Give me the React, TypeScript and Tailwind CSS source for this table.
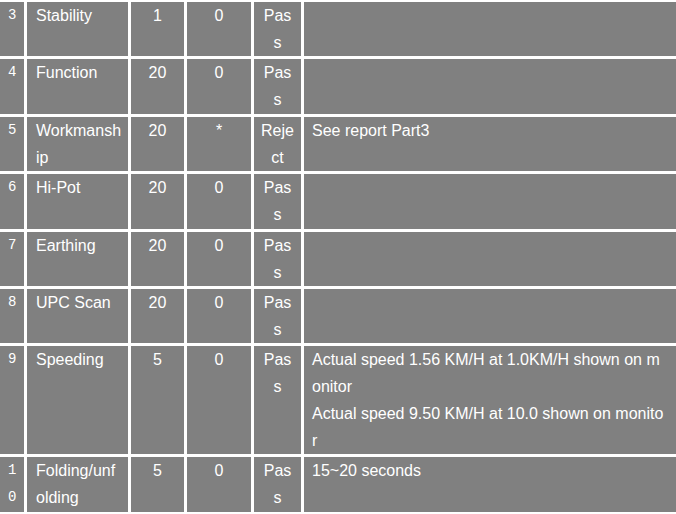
import React from "react";

type Row = {
  no: string;
  item: string;
  qty: string;
  defect: string;
  result: string;
  remark: string[];
};

const rows: Row[] = [
  { no: "3", item: "Stability", qty: "1", defect: "0", result: "Pass", remark: [] },
  { no: "4", item: "Function", qty: "20", defect: "0", result: "Pass", remark: [] },
  { no: "5", item: "Workmanship", qty: "20", defect: "*", result: "Reject", remark: ["See report Part3"] },
  { no: "6", item: "Hi-Pot", qty: "20", defect: "0", result: "Pass", remark: [] },
  { no: "7", item: "Earthing", qty: "20", defect: "0", result: "Pass", remark: [] },
  { no: "8", item: "UPC Scan", qty: "20", defect: "0", result: "Pass", remark: [] },
  {
    no: "9",
    item: "Speeding",
    qty: "5",
    defect: "0",
    result: "Pass",
    remark: [
      "Actual speed 1.56 KM/H at 1.0KM/H shown on monitor",
      "Actual speed 9.50 KM/H at 10.0 shown on monitor",
    ],
  },
  { no: "10", item: "Folding/unfolding", qty: "5", defect: "0", result: "Pass", remark: ["15~20 seconds"] },
];

const cell = "bg-[#808080] text-white break-all";

export default function App() {
  return (
    <div className="w-[676px] h-[514px] overflow-hidden bg-white pt-[2px] font-['Liberation_Sans',Arial,sans-serif] text-[16px] leading-[27px]">
      <div className="grid grid-cols-[24px_101px_53px_64px_47px_372px] auto-rows-[minmax(54.4px,auto)] gap-[3px]">
        {rows.map((r) => (
          <React.Fragment key={r.no}>
            <div className={`${cell} px-2 text-center font-['Liberation_Mono',monospace] text-[14px] text-[#f0f0f0]`}>{r.no}</div>
            <div className={`${cell} pl-[9px] pr-[5px]`}>{r.item}</div>
            <div className={`${cell} px-2 text-center`}>{r.qty}</div>
            <div className={`${cell} px-2 text-center`}>{r.defect}</div>
            <div className={`${cell} px-[6px] text-center`}>{r.result}</div>
            <div className={`${cell} px-2`}>
              {r.remark.map((t) => (
                <div key={t}>{t}</div>
              ))}
            </div>
          </React.Fragment>
        ))}
      </div>
    </div>
  );
}
